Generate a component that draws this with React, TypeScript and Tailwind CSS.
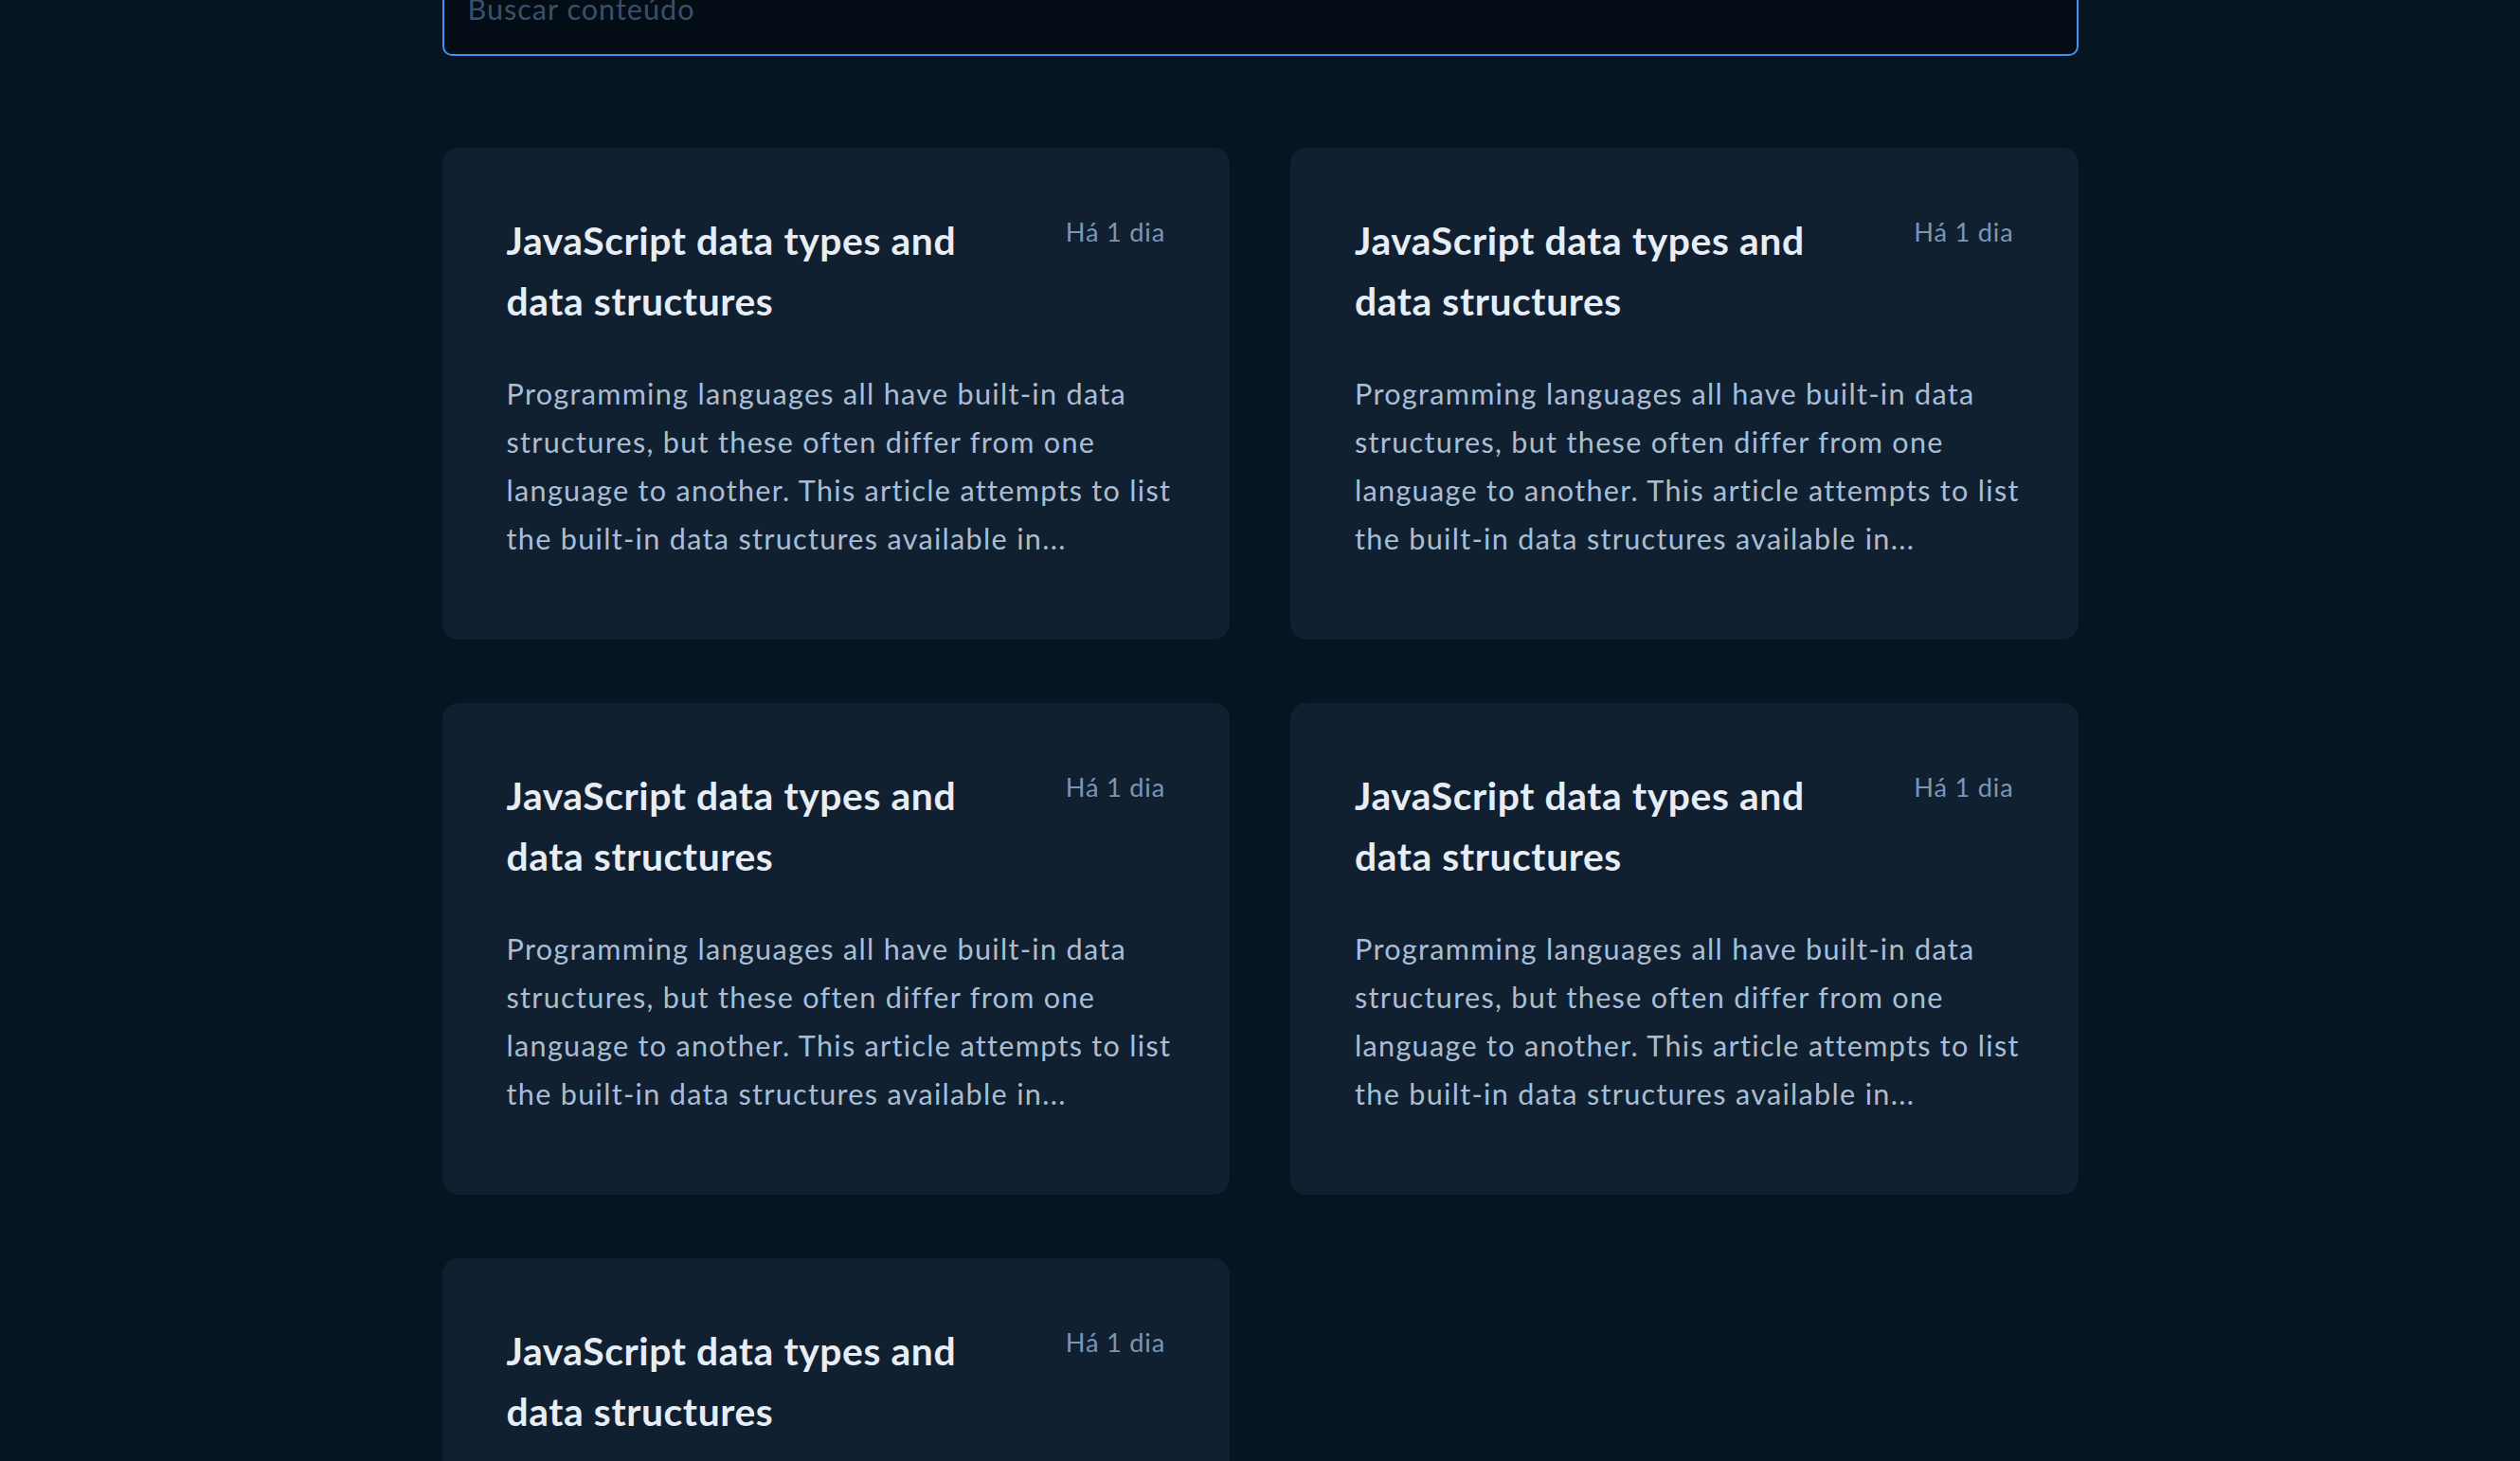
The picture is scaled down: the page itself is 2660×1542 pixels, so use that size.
const posts = Array.from({ length: 5 }, (_, i) => ({
  id: i,
  title: "JavaScript data types and data structures",
  date: "Há 1 dia",
  excerpt:
    "Programming languages all have built-in data structures, but these often differ from one language to another. This article attempts to list the built-in data structures available in...",
}));

function PostCard({ title, date, excerpt }: { title: string; date: string; excerpt: string }) {
  return (
    <article className="h-[519px] rounded-[17px] bg-[#112031] px-[68px] pt-[66px]">
      <div className="flex items-start justify-between gap-6">
        <h2 className="max-w-[500px] text-[40.8px] font-bold leading-[64px] tracking-[0.6px] text-[#e7edf4]">
          {title}
        </h2>
        <span className="shrink-0 text-[27.2px] leading-[46px] tracking-[0.8px] text-[#7b96b3]">{date}</span>
      </div>
      <p className="mr-[-14px] mt-[40px] text-[30.6px] leading-[51px] tracking-[1.3px] text-[#a9bed4]">
        {excerpt}
      </p>
    </article>
  );
}

export default function App() {
  return (
    <div className="h-[1542px] overflow-hidden bg-[#071421] font-['Lato','Noto_Sans',sans-serif]">
      <main className="mx-auto w-[1727px]">
        <input
          type="text"
          placeholder="Buscar conteúdo"
          className="mt-[-35px] block h-[94px] w-full rounded-[10px] border-2 border-[#3896f4] bg-[#040c16] px-[25px] pb-[6px] text-[30.6px] tracking-[1px] text-[#c4d4e4] placeholder:text-[#3a5069] outline-none"
        />
        <section className="mt-[97px] grid grid-cols-2 gap-x-[64px] gap-y-[67px]">
          {posts.map((p) => (
            <PostCard key={p.id} title={p.title} date={p.date} excerpt={p.excerpt} />
          ))}
        </section>
      </main>
    </div>
  );
}
